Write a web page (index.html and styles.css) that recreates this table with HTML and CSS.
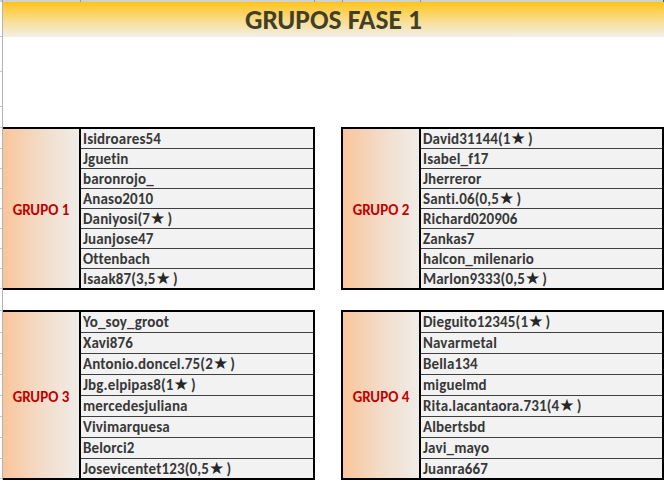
FILE: index.html
```html
<!DOCTYPE html>
<html lang="es">
<head>
<meta charset="utf-8">
<title>Grupos Fase 1</title>
<link rel="stylesheet" href="styles.css">
</head>
<body>
<div class="topline">
  <span class="tl tl-a"></span><span class="tl tl-b"></span><span class="tl tl-c"></span><span class="tl tl-d"></span><span class="tl tl-e"></span><span class="tl tl-f"></span>
</div>
<div class="sheet">
  <div class="gutter">
    <div class="g35"></div><div class="g35"></div><div class="g35"></div>
    <div class="g21"></div><div class="g21"></div>
    <div class="g20"></div><div class="g20"></div><div class="g20"></div><div class="g20"></div><div class="g20"></div><div class="g20"></div><div class="g20"></div>
    <div class="g22"></div><div class="g22"></div>
    <div class="g21"></div><div class="g21"></div><div class="g21"></div><div class="g21"></div><div class="g21"></div><div class="g21"></div>
    <div class="g20"></div>
  </div>
  <div class="main">
    <div class="title">GRUPOS FASE 1</div>
    <div class="spacer-top"></div>
    <div class="pair">
      <div class="group first upper">
        <div class="label">GRUPO 1</div>
        <div class="names">
          <div class="row">Isidroares54</div>
          <div class="row">Jguetin</div>
          <div class="row">baronrojo_</div>
          <div class="row">Anaso2010</div>
          <div class="row">Daniyosi(7<span class="star">★</span>)</div>
          <div class="row">Juanjose47</div>
          <div class="row">Ottenbach</div>
          <div class="row">Isaak87(3,5<span class="star">★</span>)</div>
        </div>
      </div>
      <div class="group second upper">
        <div class="label">GRUPO 2</div>
        <div class="names">
          <div class="row">David31144(1<span class="star">★</span>)</div>
          <div class="row">Isabel_f17</div>
          <div class="row">Jherreror</div>
          <div class="row">Santi.06(0,5<span class="star">★</span>)</div>
          <div class="row">Richard020906</div>
          <div class="row">Zankas7</div>
          <div class="row">halcon_milenario</div>
          <div class="row">Marlon9333(0,5<span class="star">★</span>)</div>
        </div>
      </div>
    </div>
    <div class="spacer-mid"></div>
    <div class="pair">
      <div class="group first lower">
        <div class="label">GRUPO 3</div>
        <div class="names">
          <div class="row">Yo_soy_groot</div>
          <div class="row">Xavi876</div>
          <div class="row">Antonio.doncel.75(2<span class="star">★</span>)</div>
          <div class="row">Jbg.elpipas8(1<span class="star">★</span>)</div>
          <div class="row">mercedesjuliana</div>
          <div class="row">Vivimarquesa</div>
          <div class="row">Belorci2</div>
          <div class="row">Josevicentet123(0,5<span class="star">★</span>)</div>
        </div>
      </div>
      <div class="group second lower">
        <div class="label">GRUPO 4</div>
        <div class="names">
          <div class="row">Dieguito12345(1<span class="star">★</span>)</div>
          <div class="row">Navarmetal</div>
          <div class="row">Bella134</div>
          <div class="row">miguelmd</div>
          <div class="row">Rita.lacantaora.731(4<span class="star">★</span>)</div>
          <div class="row">Albertsbd</div>
          <div class="row">Javi_mayo</div>
          <div class="row">Juanra667</div>
        </div>
      </div>
    </div>
  </div>
</div>
</body>
</html>
```
FILE: styles.css
```css
* { box-sizing: border-box; }
html, body {
  margin: 0;
  padding: 0;
  width: 664px;
  height: 483px;
  overflow: hidden;
  background: #ffffff;
  font-family: Carlito, Lato, "Liberation Sans", sans-serif;
}

/* clipped previous row at the very top */
.topline {
  display: flex;
  height: 2px;
  background: #d0d0d0;
}
.tl { height: 2px; border-right: 1px solid #9c9c9c; }
.tl-a { width: 3px; }
.tl-b { width: 78px; }
.tl-c { width: 234px; }
.tl-d { width: 28px; }
.tl-e { width: 78px; }
.tl-f { flex: 1; border-right: 1px solid #217346; }

.sheet {
  display: flex;
}

.gutter {
  width: 3px;
  border-right: 1px solid #b4b4b4;
  display: flex;
  flex-direction: column;
  flex: none;
}
.gutter div { border-bottom: 1px solid #c8c8c8; flex: none; }
.g35 { height: 35px; }
.g22 { height: 22px; }
.g21 { height: 21px; }
.g20 { height: 20px; }

.main {
  flex: 1;
  display: flex;
  flex-direction: column;
}

.title {
  height: 35px;
  background: linear-gradient(to bottom, #ffc31a 0%, #f9dc8a 50%, #f1efe9 100%);
  color: #433f26;
  font-weight: bold;
  font-size: 27.5px;
  line-height: 36px;
  text-align: center;
}

.spacer-top { height: 90px; }
.spacer-mid { height: 20px; }

.pair {
  display: flex;
  gap: 26px;
}

.group {
  display: flex;
  border-top: 2px solid #000;
  border-bottom: 2px solid #000;
  border-right: 2px solid #000;
}
.group.first { width: 312px; }
.group.second { width: 323px; border-left: 2px solid #000; }

.label {
  width: 78px;
  flex: none;
  border-right: 2px solid #000;
  background: linear-gradient(to right, #f9c59b 0%, #f3dcc8 50%, #f0ece8 100%);
  color: #c00000;
  font-weight: bold;
  font-size: 15px;
  display: flex;
  align-items: center;
  justify-content: center;
  padding-top: 3px;
}

.names {
  flex: 1;
  background: #f2f2f2;
  display: flex;
  flex-direction: column;
}

.row {
  height: 20px;
  border-top: 1px solid #3f3f3f;
  padding-left: 2px;
  color: #383838;
  font-weight: bold;
  font-size: 15px;
  letter-spacing: 0.15px;
  line-height: 20px;
  white-space: nowrap;
}
.row:first-child { border-top: 0; }

.upper .row:first-child { height: 19px; line-height: 20px; }
.lower .row { height: 21px; line-height: 21px; }
.lower .row:first-child { height: 20px; line-height: 21px; }
.lower .row:last-child { height: 20px; line-height: 20px; }

.star {
  font-family: "DejaVu Sans", sans-serif;
  font-size: 17px;
  line-height: 1;
  color: #262626;
  margin-right: 2px;
}
```
